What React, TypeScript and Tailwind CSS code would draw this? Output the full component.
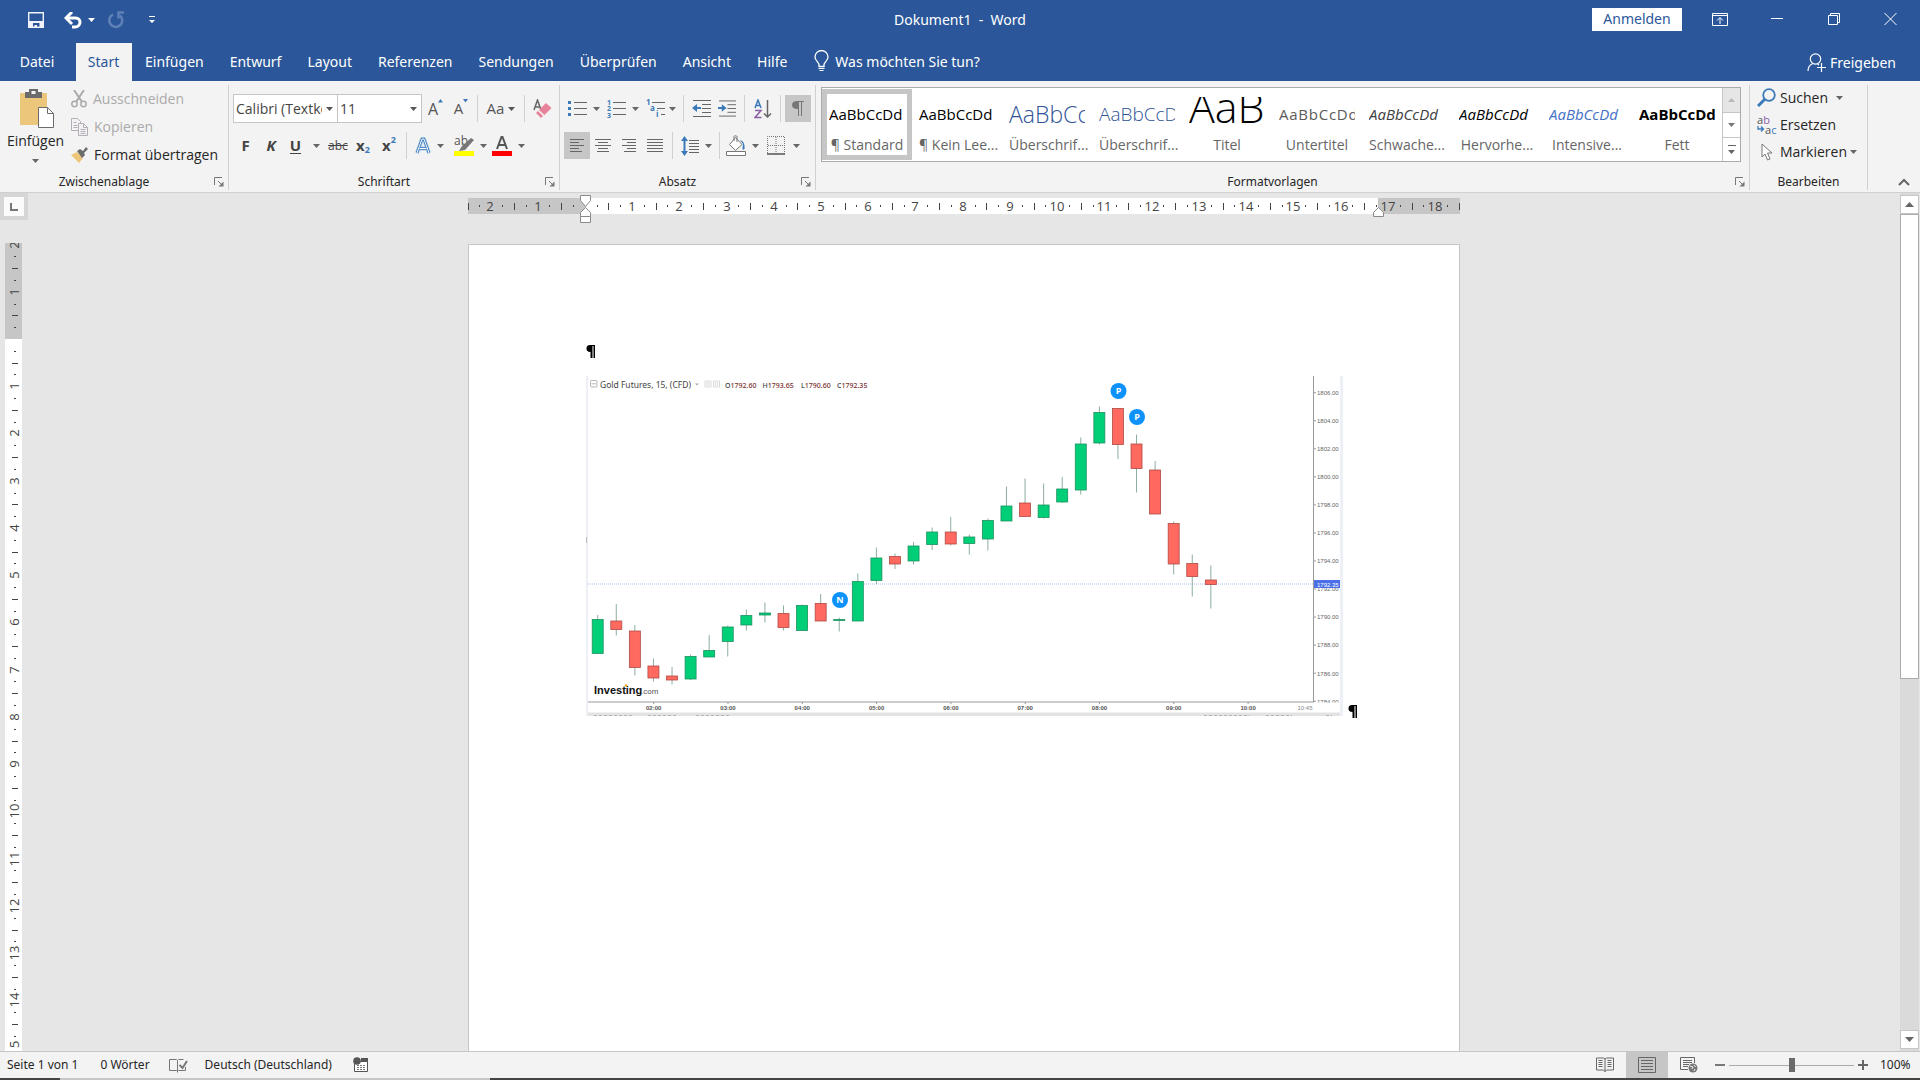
import { FC, ReactNode } from 'react'
import clsx from 'clsx'

const tabs = [
  'Einfügen',
  'Entwurf',
  'Layout',
  'Referenzen',
  'Sendungen',
  'Überprüfen',
  'Ansicht',
  'Hilfe',
]

const styles = [
  { label: '¶ Standard', sample: 'text-[15px] leading-[34px] text-black', active: true },
  { label: '¶ Kein Lee...', sample: 'text-[15px] leading-[34px] text-black' },
  {
    label: 'Überschrif...',
    sample: 'text-[23px] leading-[34px] font-light text-[#2f5496]',
  },
  {
    label: 'Überschrif...',
    sample: 'text-[19px] leading-[34px] font-light text-[#2f5496]',
  },
  { label: 'Titel', sample: 'text-[43px] leading-[20px] font-light text-black' },
  {
    label: 'Untertitel',
    sample: 'text-[15px] leading-[34px] tracking-wider text-[#5a5a5a]',
  },
  { label: 'Schwache...', sample: 'text-[15px] leading-[34px] italic text-[#404040]' },
  { label: 'Hervorhe...', sample: 'text-[15px] leading-[34px] italic text-black' },
  { label: 'Intensive...', sample: 'text-[15px] leading-[34px] italic text-[#4472c4]' },
  { label: 'Fett', sample: 'text-[15px] leading-[34px] font-bold text-black' },
]

// [high, body top, body bottom, low, rising]
const candles: [number, number, number, number, boolean][] = [
  [239, 243.5, 277.5, 277.5, true],
  [228, 245, 253.5, 259.5, false],
  [249, 255, 291.5, 299.5, false],
  [282.5, 290, 302, 305.5, false],
  [291, 300, 304, 308.5, false],
  [278.5, 280.5, 303, 304, true],
  [259, 274.5, 281, 281, true],
  [249.5, 251, 265.5, 280.5, true],
  [233.5, 239.5, 249, 254.5, true],
  [226.5, 237, 239, 246.5, true],
  [229.5, 237.5, 251.5, 254.5, false],
  [228.5, 229.5, 254.5, 254.5, true],
  [218, 227.5, 245, 245, false],
  [241.5, 243.5, 244.5, 255.5, true],
  [197.5, 205.5, 245, 245, true],
  [171.5, 182, 204.5, 208, true],
  [177.5, 180.5, 188, 193, false],
  [166, 170, 185, 188.5, true],
  [151.5, 156, 168.5, 174, true],
  [141, 156, 168, 169.5, false],
  [158.5, 161, 167.5, 178.5, true],
  [142.5, 144.5, 163, 174.5, true],
  [110.5, 130, 145, 145, true],
  [102.5, 127, 140.5, 140.5, false],
  [107.5, 129, 141.5, 142.5, true],
  [101, 113, 126, 127, true],
  [61.5, 68, 114, 118.5, true],
  [30.5, 36.5, 67, 68.5, true],
  [32.5, 32.5, 68.5, 83, false],
  [58.5, 68, 92.5, 116.5, false],
  [85, 94, 138, 138, false],
  [145.5, 147.5, 188, 198.5, false],
  [178.5, 187.5, 200.5, 220.5, false],
  [189.5, 204, 208.5, 232.5, false],
]

const prices = [1806, 1804, 1802, 1800, 1798, 1796, 1794, 1792, 1790, 1788, 1786, 1784]
const hours = ['02:00', '03:00', '04:00', '05:00', '06:00', '07:00', '08:00', '09:00', '10:00']
const badges = [
  { x: 254, y: 224, text: 'N' },
  { x: 532.5, y: 15, text: 'P' },
  { x: 551, y: 41, text: 'P' },
]

const CM = 47.24

const Caret: FC<{ className?: string }> = ({ className }) => (
  <svg className={clsx('shrink-0', className)} width="7" height="4" viewBox="0 0 7 4">
    <path d="M0 0h7L3.5 4z" fill="currentColor" />
  </svg>
)

const Divider: FC = () => <div className="h-[27px] w-px shrink-0 bg-[#d0d0d0]" />

const IconButton: FC<{
  label: string
  className?: string
  children: ReactNode
}> = ({ label, className, children }) => (
  <button
    type="button"
    aria-label={label}
    className={clsx('flex h-[27px] shrink-0 items-center justify-center', className)}
  >
    {children}
  </button>
)

const Group: FC<{
  title: string
  className?: string
  launcher?: boolean
  children: ReactNode
}> = ({ title, className, launcher = true, children }) => (
  <section className={clsx('flex flex-col border-r border-[#d0d0d0]', className)}>
    <div className="flex-1">{children}</div>
    <div className="flex h-4 items-center">
      <span className="flex-1 text-center font-['Noto_Sans',sans-serif] text-[12px] leading-4 text-[#262626]">
        {title}
      </span>
      {launcher && (
        <button type="button" aria-label={title + ' Optionen'} className="mr-1 ml-1.5">
          <svg width="10" height="10" viewBox="0 0 10 10" fill="none" stroke="#777">
            <path d="M.5 8V.5H8M4 4l4 4" />
            <path d="M9.500 4.500v5h-5z" fill="#777" stroke="none" />
          </svg>
        </button>
      )}
    </div>
  </section>
)

// Rows of horizontal lines, used by the alignment and list icons
const Lines: FC<{ rows: [number, number, number][] }> = ({ rows }) => (
  <>
    {rows.map(([x, y, w], i) => (
      <rect key={i} x={x} y={y} width={w} height="1" fill="#666" />
    ))}
  </>
)

const TitleBar: FC = () => (
  <header className="grid h-[43px] shrink-0 grid-cols-[1fr_auto_1fr] bg-[#2b579a] font-['Noto_Sans',sans-serif] text-white">
    <div className="flex h-10 items-center pl-7">
      <button type="button" aria-label="Speichern">
        <svg width="16" height="16" viewBox="0 0 16 16">
          <path d="M.7.7h14.600v14.600H.7z" fill="none" stroke="#f0f4fa" strokeWidth="1.400" />
          <path d="M1 9h14v6.500h-3.500V11H5v4.500H1z" fill="#f0f4fa" />
          <path d="M6.500 13H9v3H6.500z" fill="#f0f4fa" />
        </svg>
      </button>
      <button type="button" aria-label="Rückgängig" className="ml-5 flex items-center">
        <svg width="18" height="17" viewBox="0 0 18 17" fill="none" stroke="#fff">
          <path d="M2 6h9.500c6 0 6 8.500 0 9H8" strokeWidth="3" />
          <path d="M8 0L2 6l6 6" strokeWidth="3" />
        </svg>
        <Caret className="ml-1.5" />
      </button>
      <button type="button" aria-label="Wiederholen" className="ml-3">
        <svg width="18" height="18" viewBox="0 0 18 18" fill="none" stroke="#5f81b7">
          <path d="M6 3.500a6.500 6.500 0 1 0 7 1" strokeWidth="2.500" />
          <path d="M17 1.500h-5.500v6" strokeWidth="2.500" />
        </svg>
      </button>
      <button type="button" aria-label="Symbolleiste anpassen" className="ml-6">
        <svg width="6" height="8" viewBox="0 0 6 8" fill="#fff">
          <path d="M0 0h6v1H0zM0 4h6L3 7z" />
        </svg>
      </button>
    </div>
    <h1 className="flex h-[38px] items-center text-[14px] whitespace-pre">
      {'Dokument1  -  Word'}
    </h1>
    <div className="flex h-[38px] items-center justify-end pr-px">
      <button
        type="button"
        className="mr-[9px] h-[23px] w-[90px] bg-white text-[14px] leading-5 text-[#2b579a]"
      >
        Anmelden
      </button>
      <IconButton label="Menübandoptionen" className="w-[57px]">
        <svg width="16" height="13" viewBox="0 0 16 13" fill="none" stroke="#fff">
          <path d="M.5.5h15v12H.5zM.5 2.500h15M8 11V5M5 7.500L8 4.500l3 3" />
        </svg>
      </IconButton>
      <IconButton label="Minimieren" className="w-[57px]">
        <svg width="12" height="12" viewBox="0 0 12 12">
          <path d="M0 5h12v1H0z" fill="#fff" />
        </svg>
      </IconButton>
      <IconButton label="Verkleinern" className="w-[57px]">
        <svg width="12" height="12" viewBox="0 0 12 12" fill="none" stroke="#fff">
          <path d="M.5 2.500h9v9h-9zM2.500 2.500v-2h9v9h-2" />
        </svg>
      </IconButton>
      <IconButton label="Schließen" className="w-[57px]">
        <svg width="13" height="12" viewBox="0 0 13 12" fill="none" stroke="#fff">
          <path d="M.5 0l12 12M12.500 0l-12 12" />
        </svg>
      </IconButton>
    </div>
  </header>
)

const TabBar: FC = () => (
  <nav className="flex h-[38px] shrink-0 items-stretch bg-[#2b579a] font-['Noto_Sans',sans-serif] text-[14px] text-white">
    <button type="button" className="w-[76px] pr-0.5 pb-0.5">
      Datei
    </button>
    <button type="button" className="w-14 bg-[#f3f3f3] pr-px pb-0.5 text-[#2b579a]">
      Start
    </button>
    {tabs.map((tab) => (
      <button key={tab} type="button" className="px-[13px] pb-0.5">
        {tab}
      </button>
    ))}
    <button type="button" className="ml-3.5 flex items-center gap-1.5 pb-0.5">
      <svg width="15" height="22" viewBox="0 0 15 22" fill="none" stroke="#fff">
        <path
          d="M5 16.500v-2C4.500 12 1 10.500 1 7a6.500 6.500 0 0 1 13 0c0 3.500-3.500 5-4 7.500v2z"
          strokeWidth="1.300"
        />
        <path d="M4.500 18.500h6M5.500 20.500h4" strokeWidth="1.200" />
      </svg>
      Was möchten Sie tun?
    </button>
    <button type="button" className="mr-6 ml-auto flex items-center gap-1 pt-px">
      <svg width="19" height="19" viewBox="0 0 19 19" fill="none" stroke="#fff">
        <circle cx="8.500" cy="6" r="5.200" strokeWidth="1.200" />
        <path
          d="M1 18c0-4 2-6.500 5-7.500M10.500 11l1.500 1M14.500 10v9M10 14.500h9"
          strokeWidth="1.200"
        />
      </svg>
      Freigeben
    </button>
  </nav>
)

const Clipboard: FC = () => (
  <Group title="Zwischenablage" className="w-[229px]">
    <div className="flex">
      <button
        type="button"
        className="flex w-[71px] flex-col items-center pt-[3px] text-[14px] leading-5 text-[#262626]"
      >
        <svg width="36" height="41" viewBox="0 0 36 41">
          <path d="M2 5h27v32H2z" fill="#ecc77b" />
          <path d="M7 10V4h4V1h9v3h4v6z" fill="#6b6b6b" />
          <path d="M13.500 3h4v3h-4z" fill="#f3f3f3" />
          <path d="M20.500 19.500h9l6 6v14h-15z" fill="#fff" stroke="#6b6b6b" />
          <path d="M29.500 19.500v6h6" fill="none" stroke="#6b6b6b" />
        </svg>
        <span className="mt-0.5">Einfügen</span>
        <Caret className="mt-2 text-[#666]" />
      </button>
      <div className="flex flex-col text-[14px] leading-5 whitespace-nowrap">
        <button type="button" className="flex h-7 items-center gap-1.5 text-[#ababab]">
          <svg width="16" height="18" viewBox="0 0 16 18" fill="none" stroke="#ababab">
            <circle cx="3.500" cy="14" r="2.700" strokeWidth="1.500" />
            <circle cx="12.500" cy="14" r="2.700" strokeWidth="1.500" />
            <path d="M3 0l8 12M13 0L5 12" strokeWidth="2" />
          </svg>
          Ausschneiden
        </button>
        <button type="button" className="flex h-7 items-center gap-1.5 text-[#ababab]">
          <svg width="17" height="18" viewBox="0 0 17 18" fill="none" stroke="#b5adb8">
            <path d="M.5.5h6l3 3v9h-9zM2.500 4.500h3M2.500 7.500h4M2.500 9.500h4" />
            <path d="M7.500 5.500h5l4 4v8h-9z" fill="#f3f3f3" />
            <path d="M12.500 5.500v4h4M9.500 11.500h5M9.500 13.500h5M9.500 15.500h5" />
          </svg>
          Kopieren
        </button>
        <button type="button" className="flex h-7 items-center gap-1.5 text-[#262626]">
          <svg width="17" height="16" viewBox="0 0 17 16">
            <path d="M0 8l6-3 6 6-4 5z" fill="#ecc77b" />
            <path d="M6 4l3-2 3 2 3-4 2 2-4 4 1 2-3 3z" fill="#6b6b6b" />
          </svg>
          Format übertragen
        </button>
      </div>
    </div>
  </Group>
)

const FontGroup: FC = () => (
  <Group title="Schriftart" className="w-[331px]">
    <div className="flex h-[47px] items-center pl-1 text-[#555]">
      <div className="flex h-[29px] w-[105px] items-center border border-[#c6c6c6] bg-white pr-1">
        <select
          aria-label="Schriftart"
          className="min-w-0 flex-1 appearance-none overflow-hidden pl-0.5 text-[14px] text-[#444] outline-none"
        >
          <option>Calibri (Textkörper)</option>
        </select>
        <Caret className="ml-1" />
      </div>
      <div className="-ml-px flex h-[29px] w-[85px] items-center border border-[#c6c6c6] bg-white pr-1">
        <select
          aria-label="Schriftgrad"
          className="min-w-0 flex-1 appearance-none pl-0.5 text-[14px] text-[#444] outline-none"
        >
          <option>11</option>
        </select>
        <Caret />
      </div>
      <IconButton label="Schriftgrad vergrößern" className="w-[27px] text-[16px]">
        A
        <svg className="mb-4" width="5" height="4" viewBox="0 0 5 4">
          <path d="M0 3.500h5L2.500 0z" fill="#3c79b8" />
        </svg>
      </IconButton>
      <IconButton label="Schriftgrad verkleinern" className="w-6 text-[15px]">
        A
        <svg className="mb-4" width="5" height="4" viewBox="0 0 5 4">
          <path d="M0 0h5L2.500 3.500z" fill="#3c79b8" />
        </svg>
      </IconButton>
      <div className="w-1" />
      <Divider />
      <IconButton label="Groß-/Kleinschreibung" className="w-[46px] gap-1 text-[15px]">
        Aa <Caret />
      </IconButton>
      <Divider />
      <IconButton label="Formatierung löschen" className="ml-2 w-[19px]">
        <svg width="19" height="20" viewBox="0 0 19 20">
          <path d="M1 11L4.500 1 8 11M2.500 8H7" stroke="#666" strokeWidth="1.500" fill="none" />
          <path d="M13 4l5.500 5-7 7L6 11z" fill="#e8829a" />
          <path d="M5 12l5 5-2 2-5-5z" fill="#e8829a" />
        </svg>
      </IconButton>
    </div>
    <div className="flex h-[27px] items-center pl-1 text-[#444]">
      <IconButton label="Fett" className="w-[25px] text-[15px] font-bold">
        F
      </IconButton>
      <IconButton label="Kursiv" className="w-[26px] text-[15px] font-bold italic">
        K
      </IconButton>
      <IconButton label="Unterstrichen" className="w-[42px] gap-3 text-[15px] font-bold">
        <span className="border-b border-[#444] leading-4">U</span>
        <Caret className="text-[#666]" />
      </IconButton>
      <IconButton label="Durchgestrichen" className="w-[24px] text-[12px] line-through">
        abc
      </IconButton>
      <IconButton label="Tiefgestellt" className="w-[26px] text-[15px] font-bold">
        x<span className="mt-2 text-[9px] text-[#3c79b8]">2</span>
      </IconButton>
      <IconButton label="Hochgestellt" className="w-[26px] text-[15px] font-bold">
        x<span className="mb-3 text-[9px] text-[#3c79b8]">2</span>
      </IconButton>
      <div className="w-1" />
      <Divider />
      <IconButton label="Texteffekte" className="w-[44px] gap-1.5">
        <svg width="16" height="18" viewBox="0 0 16 18" fill="none" strokeLinejoin="round">
          <path d="M2 16L7 2h2l5 14M4.500 11.500h7" stroke="#a9cdee" strokeWidth="4" />
          <path d="M2 16L7 2h2l5 14M4.500 11.500h7" stroke="#3c79b8" strokeWidth="2.500" />
          <path d="M2 16L7 2h2l5 14M4.500 11.500h7" stroke="#fff" strokeWidth="1" />
        </svg>
        <Caret className="text-[#666]" />
      </IconButton>
      <IconButton label="Texthervorhebungsfarbe" className="w-[38px] gap-1.5">
        <svg width="20" height="21" viewBox="0 0 20 21">
          <text x="0" y="10" fontSize="12" fill="#555">
            ab
          </text>
          <path d="M17 3l3 2-9 10-6 1 3-5z" fill="#777" />
          <path d="M0 16h20v5H0z" fill="#ff0" />
        </svg>
        <Caret className="text-[#666]" />
      </IconButton>
      <IconButton label="Schriftfarbe" className="w-[38px] gap-1.5">
        <svg width="20" height="21" viewBox="0 0 20 21">
          <path d="M5 14L9.500 2h1L15 14M6.500 10h7" fill="none" stroke="#555" strokeWidth="2" />
          <path d="M0 16h20v5H0z" fill="red" />
        </svg>
        <Caret className="text-[#666]" />
      </IconButton>
    </div>
  </Group>
)

const Paragraph: FC = () => (
  <Group title="Absatz" className="w-64">
    <div className="flex h-[47px] items-center pl-2 text-[#666]">
      <IconButton label="Aufzählungszeichen" className="w-[39px] justify-start gap-1.5">
        <svg width="19" height="19" viewBox="0 0 19 19">
          <Lines rows={[[6, 3, 13], [6, 9, 13], [6, 15, 13]]} />
          <path d="M0 2h3v3H0zM0 8h3v3H0zM0 14h3v3H0z" fill="#3c79b8" />
        </svg>
        <Caret />
      </IconButton>
      <IconButton label="Nummerierung" className="w-[39px] justify-start gap-1.5">
        <svg width="19" height="19" viewBox="0 0 19 19">
          <Lines rows={[[6, 3, 13], [6, 9, 13], [6, 15, 13]]} />
          <g fill="#3c79b8" fontSize="7" fontWeight="700">
            <text x="0" y="6">1</text>
            <text x="0" y="12">2</text>
            <text x="0" y="19">3</text>
          </g>
        </svg>
        <Caret />
      </IconButton>
      <IconButton label="Liste mit mehreren Ebenen" className="w-[37px] justify-start gap-1">
        <svg width="19" height="19" viewBox="0 0 19 19">
          <Lines rows={[[6, 3, 13], [11, 9, 8], [15, 15, 4]]} />
          <g fill="#3c79b8" fontSize="8" fontWeight="700">
            <text x="0" y="6">1</text>
            <text x="4" y="12">a</text>
            <text x="10" y="18">i</text>
          </g>
        </svg>
        <Caret />
      </IconButton>
      <Divider />
      <IconButton label="Einzug verkleinern" className="w-[34px]">
        <svg width="19" height="17" viewBox="0 0 19 17">
          <Lines rows={[[1, 0, 18], [10, 4, 9], [10, 8, 9], [10, 12, 9], [1, 16, 18]]} />
          <path d="M0 8l5-4v3h4v2H5v3z" fill="#3c79b8" />
        </svg>
      </IconButton>
      <IconButton label="Einzug vergrößern" className="w-[26px] pr-2">
        <svg width="19" height="17" viewBox="0 0 19 17">
          <Lines rows={[[1, 0, 18], [10, 4, 9], [10, 8, 9], [10, 12, 9], [1, 16, 18]]} />
          <path d="M9 8L4 4v3H0v2h4v3z" fill="#3c79b8" />
        </svg>
      </IconButton>
      <Divider />
      <IconButton label="Sortieren" className="w-[35px]">
        <svg width="18" height="20" viewBox="0 0 18 20" fill="none">
          <path d="M1 9l3-8 3 8M2 6.500h4" stroke="#3c79b8" strokeWidth="1.500" />
          <path d="M1 11.500h6L1 18.500h6.500" stroke="#8b5ea8" strokeWidth="1.500" />
          <path d="M13.500 1v17M10 14.500l3.500 3.500 3.500-3.500" stroke="#666" strokeWidth="1.500" />
        </svg>
      </IconButton>
      <Divider />
      <IconButton label="Alle anzeigen" className="ml-1 w-[26px] bg-[#c6c6c6]">
        <svg width="12" height="15" viewBox="0 0 12 15">
          <path d="M12 0v1h-2v14H9V1H7v14H6V8C2 8 0 6.500 0 4s2-4 5-4z" fill="#777" />
        </svg>
      </IconButton>
    </div>
    <div className="flex h-[27px] items-center pl-1 text-[#666]">
      <IconButton label="Linksbündig" className="w-[26px] bg-[#c6c6c6]">
        <svg width="16" height="13" viewBox="0 0 16 13">
          <Lines rows={[[1, 0, 14], [1, 3, 9], [1, 6, 14], [1, 9, 9], [1, 12, 12]]} />
        </svg>
      </IconButton>
      <IconButton label="Zentriert" className="w-[26px]">
        <svg width="16" height="13" viewBox="0 0 16 13">
          <Lines rows={[[0, 0, 16], [3, 3, 10], [0, 6, 16], [3, 9, 10], [2, 12, 12]]} />
        </svg>
      </IconButton>
      <IconButton label="Rechtsbündig" className="w-[26px]">
        <svg width="16" height="13" viewBox="0 0 16 13">
          <Lines rows={[[1, 0, 14], [6, 3, 9], [1, 6, 14], [6, 9, 9], [3, 12, 12]]} />
        </svg>
      </IconButton>
      <IconButton label="Blocksatz" className="w-[26px]">
        <svg width="16" height="13" viewBox="0 0 16 13">
          <Lines rows={[[0, 0, 16], [0, 3, 16], [0, 6, 16], [0, 9, 16], [0, 12, 16]]} />
        </svg>
      </IconButton>
      <div className="w-1" />
      <Divider />
      <IconButton label="Zeilenabstand" className="w-[46px] gap-1.5">
        <svg width="18" height="20" viewBox="0 0 18 20">
          <Lines rows={[[8, 4, 10], [8, 7, 10], [8, 10, 10], [8, 13, 10], [8, 16, 10]]} />
          <path d="M3.500 0L7 5H4.500v3h-2V5H0zM3.500 20L0 15h2.500v-3h2v3H7z" fill="#3c79b8" />
          <path d="M2.500 8h2v4h-2z" fill="#3c79b8" />
        </svg>
        <Caret />
      </IconButton>
      <Divider />
      <IconButton label="Schattierung" className="w-11 gap-1.5">
        <svg width="20" height="21" viewBox="0 0 20 21" fill="none" stroke="#777">
          <path d="M3.500 9.500l6-7 6.500 7-6.500 6z" fill="#fff" />
          <path d="M8 6V1.500C8 .5 11 .5 11 1.500V7" />
          <path d="M14 5c4 1 5 5 4.500 9-1 1-2 1-2-1l.5-4z" fill="#3c79b8" stroke="none" />
          <path d="M.5 16.500h19v4H.5z" fill="#fff" />
        </svg>
        <Caret />
      </IconButton>
      <IconButton label="Rahmen" className="w-[38px] gap-2">
        <svg width="18" height="19" viewBox="0 0 18 19" fill="none" stroke="#777">
          <path d="M.5 17V.5h17V18M9 1v17M1 9.500h16" strokeDasharray="1 1" />
          <path d="M0 18h18" stroke="#555" strokeWidth="1.500" />
        </svg>
        <Caret />
      </IconButton>
    </div>
  </Group>
)

const StyleGallery: FC = () => (
  <Group title="Formatvorlagen" className="flex-1">
    <div className="mt-0.5 ml-[5px] flex h-[75px] w-[920px] border border-[#ababab] bg-white">
      {styles.map((style, i) => (
        <button
          key={i}
          type="button"
          className={clsx(
            'my-px flex w-[90px] shrink-0 flex-col border-5 px-0.5',
            style.active ? 'border-[#c6c6c6]' : 'border-transparent'
          )}
        >
          <span className="mt-[3px] h-[34px] w-full shrink-0 overflow-hidden text-left">
            <span className={clsx('block whitespace-nowrap', style.sample)}>AaBbCcDd</span>
          </span>
          <span className="mt-1 w-full text-center text-[14px] leading-5 whitespace-nowrap text-[#666]">
            {style.label}
          </span>
        </button>
      ))}
      <div className="flex flex-1 flex-col divide-y divide-[#c6c6c6] border-l border-[#c6c6c6]">
        <button
          type="button"
          aria-label="Nach oben"
          className="flex h-[25px] items-center justify-center bg-[#e6e6e6] text-[#b8b8b8]"
        >
          <Caret className="rotate-180" />
        </button>
        <button
          type="button"
          aria-label="Nach unten"
          className="flex flex-1 items-center justify-center text-[#777]"
        >
          <Caret />
        </button>
        <button
          type="button"
          aria-label="Weitere"
          className="flex flex-1 flex-col items-center justify-center gap-1 text-[#666]"
        >
          <span className="h-px w-2 bg-[#666]" />
          <Caret />
        </button>
      </div>
    </div>
  </Group>
)

const Editing: FC = () => (
  <Group title="Bearbeiten" className="w-[118px]" launcher={false}>
    <div className="-mt-px flex flex-col pl-[7px] text-[14px] leading-5 text-[#262626]">
      <button type="button" className="flex h-[27px] items-center">
        <svg width="19" height="19" viewBox="0 0 19 19" fill="none" stroke="#3c79b8">
          <circle cx="12" cy="7" r="5.800" strokeWidth="1.800" />
          <path d="M8 11l-7 7" strokeWidth="3" />
        </svg>
        <span className="ml-1">Suchen</span>
        <Caret className="ml-2 text-[#666]" />
      </button>
      <button type="button" className="flex h-[27px] items-center">
        <svg width="20" height="20" viewBox="0 0 20 20" fontSize="11" fill="#555">
          <text x="0" y="9">
            a<tspan fill="#8b5ea8">b</tspan>
          </text>
          <text x="8" y="19">
            a<tspan fill="#3c79b8">c</tspan>
          </text>
          <path
            d="M1 11v3h5M4 11.500l2.500 2.500L4 16.500"
            fill="none"
            stroke="#3c79b8"
            strokeWidth="1.300"
          />
        </svg>
        <span className="ml-[3px]">Ersetzen</span>
      </button>
      <button type="button" className="flex h-[27px] items-center">
        <svg className="ml-1" width="12" height="18" viewBox="0 0 12 18" fill="#fff" stroke="#777">
          <path d="M1 1v13l3-3 2.500 6 2.500-1-2.500-6H11z" />
        </svg>
        <span className="ml-[7px]">Markieren</span>
        <Caret className="ml-[3px] text-[#666]" />
      </button>
    </div>
  </Group>
)

const Ribbon: FC = () => (
  <div className="flex h-28 shrink-0 border-b border-[#d0d0d0] bg-[#f3f3f3] pt-1 pb-0.5">
    <Clipboard />
    <FontGroup />
    <Paragraph />
    <StyleGallery />
    <Editing />
    <div className="flex w-[52px] items-end justify-end pr-2.5 pb-1">
      <button type="button" aria-label="Menüband reduzieren">
        <svg width="12" height="8" viewBox="0 0 12 8" fill="none" stroke="#666">
          <path d="M1 7l5-5 5 5" strokeWidth="2" />
        </svg>
      </button>
    </div>
  </div>
)

const rulerMarks = (from: number, to: number) => {
  const marks: number[] = []
  for (let q = from; q <= to; q += 0.25) marks.push(q)
  return marks
}

const HorizontalRuler: FC = () => (
  <svg width="992" height="28" viewBox="0 0 992 28" className="shrink-0">
    <path d="M0 3h992v16H0z" fill="#c6c6c6" />
    <path d="M118 3h792v16H118z" fill="#fff" />
    {rulerMarks(-2.5, 18.5).map((q) => {
      const x = Math.round(116.8 + q * CM)
      if (q === 0) return null
      if (Number.isInteger(q)) {
        return (
          <text key={q} x={x} y="16" fontSize="13" textAnchor="middle" fill="#444">
            {Math.abs(q)}
          </text>
        )
      }
      const half = Number.isInteger(q * 2)
      return (
        <rect
          key={q}
          x={Math.max(x, 0)}
          y={half ? 8 : 10}
          width="1"
          height={half ? 7 : 2}
          fill="#444"
        />
      )
    })}
    <g fill="#fff" stroke="#8a8a8a">
      <path d="M112.500.5h10v5l-5 6-5-6z" />
      <path d="M112.500 21.500v-4l5-5 5 5v4z" />
      <path d="M112.500 21.500h10v6h-10z" />
      <path d="M905.500 21.500v-4l5-5 5 5v4z" />
    </g>
  </svg>
)

const VerticalRuler: FC = () => (
  <svg width="17" height="1200" viewBox="0 0 17 1200" className="shrink-0">
    <path d="M0 0h17v1200H0z" fill="#fff" />
    <path d="M0 0h17v96H0z" fill="#c6c6c6" />
    {rulerMarks(-2, 22).map((q) => {
      const y = Math.round(96 + q * CM)
      if (q === 0) return null
      if (Number.isInteger(q)) {
        return (
          <text
            key={q}
            transform={`translate(14 ${y}) rotate(-90)`}
            fontSize="13"
            textAnchor="middle"
            fill="#444"
          >
            {Math.abs(q)}
          </text>
        )
      }
      const half = Number.isInteger(q * 2)
      return (
        <rect
          key={q}
          x={half ? 7 : 9}
          y={y}
          width={half ? 6 : 2}
          height="1"
          fill="#444"
        />
      )
    })}
  </svg>
)

const Chart: FC = () => (
  <svg width="758" height="340" viewBox="0 0 758 340" className="shrink-0">
    <path d="M0 0h2v340H0zM754 0h3v340h-3z" fill="#eef0f7" />
    <path d="M2 336.500h752v3.500H2z" fill="#e3e3e3" />
    <path
      d="M8 339.500h40M62 339.500h30M110 339.500h34M618 339.500h46M680 339.500h26M740 339.500h6"
      stroke="#b5b5b5"
      strokeDasharray="3 2"
    />
    <path d="M.5 161v6" stroke="#bbb" />

    {/* Legend */}
    <g fill="none" stroke="#999" strokeWidth=".7">
      <rect x="4.500" y="4.500" width="6.500" height="6.500" rx="1" />
      <path d="M5.500 7.800h4.500" />
      <path d="M119 5h6v6h-6zM127.500 5h6v6h-6z" stroke="#ccc" />
      <circle cx="122" cy="8" r="1.500" stroke="#ccc" />
      <circle cx="130.500" cy="8" r="1.500" stroke="#ccc" />
    </g>
    <path d="M109 7.500h4l-2 2z" fill="#aaa" />
    <g fill="#444" fontFamily="Noto Sans, sans-serif">
      <text x="14" y="11.500" fontSize="8.500">
        Gold Futures, 15, (CFD)
      </text>
      {[
        { x: 139, name: 'O', value: '1792.60' },
        { x: 176.5, name: 'H', value: '1793.65' },
        { x: 215, name: 'L', value: '1790.60' },
        { x: 251, name: 'C', value: '1792.35' },
      ].map(({ x, name, value }) => (
        <text key={name} x={x} y="11.500" fontSize="7" fontWeight="500">
          {name}
          <tspan fill="#7c3232">{value}</tspan>
        </text>
      ))}
    </g>

    <path d="M2 208h726" stroke="#a9bcf2" strokeDasharray="1 1" />

    {candles.map(([high, top, bottom, low, rising], i) => {
      const x = 11.7 + i * 18.58
      return (
        <g key={i}>
          <path d={`M${x} ${high}V${low}`} stroke="#8fae9f" />
          <rect
            x={x - 5.5}
            y={top}
            width="11"
            height={bottom - top}
            fill={rising ? '#00cf78' : '#ff6960'}
            stroke={rising ? '#1d9160' : '#b04a44'}
            strokeWidth=".8"
          />
        </g>
      )
    })}

    {badges.map((b, i) => (
      <g key={i}>
        <circle cx={b.x} cy={b.y} r="8" fill="#0d92fb" />
        <text x={b.x} y={b.y + 3} fontSize="9" fontWeight="700" textAnchor="middle" fill="#fff">
          {b.text}
        </text>
      </g>
    ))}

    {/* Axes */}
    <path d="M2 326h726M727.500 0v326" fill="none" stroke="#999" />
    <g fontSize="6" fill="#666" fontFamily="Liberation Sans, sans-serif">
      {prices.map((price, i) => (
        <g key={price}>
          <path d={`M728 ${16.7 + i * 28.05}h2`} stroke="#999" />
          <text x="731" y={19 + i * 28.05}>
            {price}.00
          </text>
        </g>
      ))}
    </g>
    <path d="M728 326.500h26v6h-26z" fill="#fff" />
    <path d="M728 204h26v8h-26z" fill="#4a6fe8" />
    <g fontSize="6" fontFamily="Liberation Sans, sans-serif">
      <text x="731" y="210.500" fill="#fff">1792.35</text>
      {hours.map((hour, i) => (
        <g key={hour}>
          <path d={`M${67.7 + i * 74.3} 326v2`} stroke="#999" />
          <text
            x={67.7 + i * 74.3}
            y="333.500"
            fontWeight="700"
            textAnchor="middle"
            fill="#555"
          >
            {hour}
          </text>
        </g>
      ))}
      <text x="719" y="333.500" textAnchor="middle" fill="#888">10:45</text>
    </g>

    <text x="8" y="318" fontSize="11" fontWeight="800" fill="#111" fontFamily="Liberation Sans, sans-serif">
      Investing
    </text>
    <text x="55" y="318" fontSize="8" fill="#555" fontFamily="Liberation Sans, sans-serif">
      .com
    </text>
    <circle cx="40" cy="309.500" r="1.300" fill="#f7a81b" />
  </svg>
)

const Pilcrow: FC<{ className?: string }> = ({ className }) => (
  <svg className={clsx('shrink-0', className)} width="9" height="13" viewBox="0 0 9 13">
    <path d="M4 0H9v13H7.500V1H6.500v12H4.500V7C1.500 7 .5 5.500.5 3.500S1.500 0 4 0z" fill="#000" />
  </svg>
)

const Workspace: FC = () => (
  <main className="flex min-h-0 flex-1 bg-[#e6e6e6]">
    <div className="flex w-7 shrink-0 flex-col overflow-hidden">
      <button
        type="button"
        aria-label="Tabstopp"
        className="flex h-[27px] shrink-0 items-center justify-center border-4 border-[#d6d6d6] bg-[#fbfbfb]"
      >
        <svg width="8" height="8" viewBox="0 0 8 8">
          <path d="M1 0v7h7" fill="none" stroke="#777" strokeWidth="2" />
        </svg>
      </button>
      <div className="mt-[23px] ml-[5px] min-h-0 flex-1 overflow-hidden">
        <VerticalRuler />
      </div>
    </div>

    <div className="flex min-w-0 flex-1 flex-col items-center overflow-hidden pt-0.5">
      <HorizontalRuler />
      <article className="mt-[21px] w-[992px] flex-1 border border-b-0 border-[#c6c6c6] bg-white pt-[100px] pl-[117px]">
        <div className="h-[31px]">
          <Pilcrow />
        </div>
        <div className="flex items-end gap-1">
          <Chart />
          <Pilcrow className="-mb-0.5" />
        </div>
      </article>
    </div>

    <div className="mr-px flex w-[19px] shrink-0 flex-col bg-[#dadada] pt-0.5 pb-0.5 text-[#666]">
      <button
        type="button"
        aria-label="Nach oben blättern"
        className="flex h-[19px] items-center justify-center border border-[#c6c6c6] bg-white"
      >
        <svg width="9" height="5" viewBox="0 0 9 5">
          <path d="M0 5h9L4.500 0z" fill="currentColor" />
        </svg>
      </button>
      <div className="min-h-0 flex-1">
        <div className="h-[57%] border border-[#ababab] bg-white" />
      </div>
      <button
        type="button"
        aria-label="Nach unten blättern"
        className="flex h-[19px] items-center justify-center border border-[#c6c6c6] bg-white"
      >
        <svg width="9" height="5" viewBox="0 0 9 5">
          <path d="M0 0h9L4.500 5z" fill="currentColor" />
        </svg>
      </button>
    </div>
  </main>
)

const StatusBar: FC = () => (
  <footer className="flex h-[27px] shrink-0 items-center border-t border-[#c6c6c6] bg-[#f3f3f3] font-['Noto_Sans',sans-serif] text-[12px] text-[#262626]">
    <span className="ml-[7px]">Seite 1 von 1</span>
    <span className="ml-[22px]">0 Wörter</span>
    <IconButton label="Rechtschreibung" className="ml-[19px]">
      <svg width="19" height="15" viewBox="0 0 19 15" fill="none" stroke="#777">
        <path d="M14.500 1.500h-5l-1 1-1-1h-7v11h7l1 1 1-1h7V9M8.500 2.500v12" />
        <path d="M10.500 7l3 3L18 3" strokeWidth="2" />
      </svg>
    </IconButton>
    <span className="ml-[17px]">Deutsch (Deutschland)</span>
    <IconButton label="Makro aufzeichnen" className="ml-[21px]">
      <svg width="16" height="16" viewBox="0 0 16 16">
        <path d="M1.500 4.500h13v10h-13z" fill="#fff" stroke="#555" />
        <path d="M8 1h7v4H8z" fill="#555" />
        <circle cx="4" cy="4" r="3.800" fill="#555" />
        <path d="M4 8.500h9M4 10.500h9M4 12.500h9" stroke="#777" strokeDasharray="2 1" />
      </svg>
    </IconButton>

    <div className="ml-auto flex h-full items-center">
      <button type="button" aria-label="Lesemodus" className="flex w-[42px] justify-center">
        <svg width="18" height="16" viewBox="0 0 18 16" fill="none" stroke="#666">
          <path d="M9 2L7.500 1H.5v12h7L9 14.500 10.500 13h7V1h-7zM9 2v13" />
          <path d="M2.500 3.500h4M2.500 5.500h4M2.500 7.500h4M2.500 9.500h4M11.500 3.500h4M11.500 5.500h4M11.500 7.500h4M11.500 9.500h4" />
        </svg>
      </button>
      <button
        type="button"
        aria-label="Seitenlayout"
        className="flex h-full w-[42px] items-center justify-center bg-[#c6c6c6]"
      >
        <svg width="18" height="16" viewBox="0 0 18 16" fill="none" stroke="#666">
          <path d="M.5.5h17v15H.5zM3 3.500h12M3 6.500h12M3 9.500h12M3 12.500h12" />
        </svg>
      </button>
      <button type="button" aria-label="Weblayout" className="flex w-[42px] justify-center">
        <svg width="18" height="16" viewBox="0 0 18 16" fill="none" stroke="#666">
          <path d="M8 12.500H.5V.5h14V6M3 3.500h9M3 5.500h9M3 7.500h6M3 9.500h5" />
          <circle cx="13" cy="11" r="4.500" fill="#777" stroke="none" />
          <path d="M10 9l3 1-1 2M14 8l1.500 2M14 14l1-2" stroke="#f3f3f3" />
        </svg>
      </button>
      <button type="button" aria-label="Verkleinern" className="ml-[5px]">
        <svg width="10" height="10" viewBox="0 0 10 10">
          <path d="M0 4h10v2H0z" fill="#777" />
        </svg>
      </button>
      <input
        type="range"
        aria-label="Zoom"
        min="0"
        max="100"
        defaultValue="50"
        className="mx-1 h-4 w-[125px] appearance-none bg-transparent [&::-webkit-slider-runnable-track]:h-px [&::-webkit-slider-runnable-track]:bg-[#ababab] [&::-webkit-slider-thumb]:-mt-[7px] [&::-webkit-slider-thumb]:h-3.5 [&::-webkit-slider-thumb]:w-1.5 [&::-webkit-slider-thumb]:appearance-none [&::-webkit-slider-thumb]:bg-[#6b6b6b]"
      />
      <button type="button" aria-label="Vergrößern">
        <svg width="10" height="10" viewBox="0 0 10 10">
          <path d="M0 4h10v2H0zM4 0h2v10H4z" fill="#666" />
        </svg>
      </button>
      <span className="mr-2 ml-3 w-8">100%</span>
    </div>
  </footer>
)

const App: FC = () => (
  <div className="flex h-screen flex-col overflow-hidden bg-[#e6e6e6] font-['Open_Sans','Noto_Sans',sans-serif]">
    <TitleBar />
    <TabBar />
    <Ribbon />
    <Workspace />
    <StatusBar />
    <div className="flex h-0.5 shrink-0 bg-[#444]">
      <div className="ml-[60px] w-[430px] bg-[#c6c6c6]" />
    </div>
  </div>
)

export default App
